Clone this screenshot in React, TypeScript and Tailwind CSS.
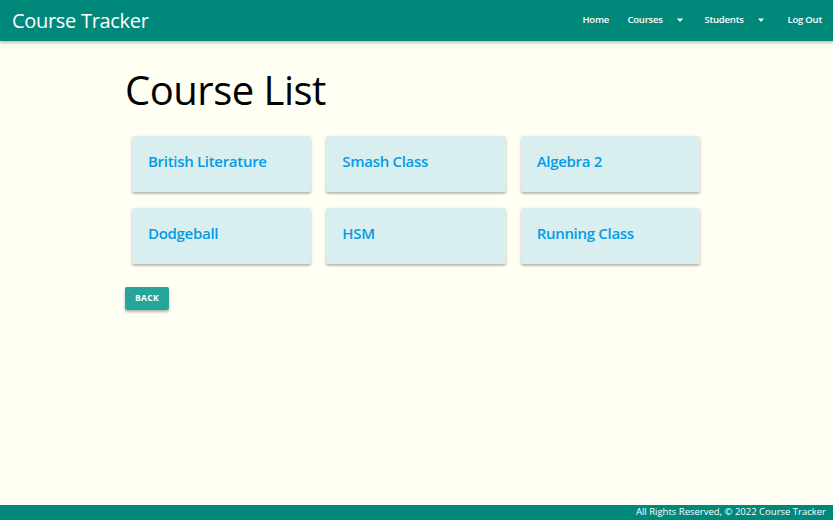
import React from "react";

const courses = [
  "British Literature",
  "Smash Class",
  "Algebra 2",
  "Dodgeball",
  "HSM",
  "Running Class",
];

function Caret() {
  return (
    <svg width="8" height="5" viewBox="0 0 8 5" className="ml-[13px]">
      <path d="M1 0.5 L7 0.5 L4 4 Z" fill="#ffffff" />
    </svg>
  );
}

export default function App() {
  return (
    <div
      className="flex min-h-[520px] flex-col bg-[#fffff3] text-black"
      style={{ fontFamily: '"Open Sans", "Noto Sans", sans-serif' }}
    >
      <nav className="relative z-10 flex h-[41px] items-center justify-between bg-[#00897b] pl-[12px] pr-[11px] text-white shadow-[0_2px_3px_rgba(0,0,0,0.25)]">
        <span className="text-[20px] leading-none tracking-[-0.3px]">Course Tracker</span>
        <ul className="flex items-center text-[9.5px] font-semibold tracking-[-0.2px]">
          <li className="w-[45px]">Home</li>
          <li className="flex w-[77px] items-center">
            Courses
            <Caret />
          </li>
          <li className="flex w-[83px] items-center">
            Students
            <Caret />
          </li>
          <li>Log Out</li>
        </ul>
      </nav>

      <main className="mx-auto w-[583px] flex-1">
        <h1 className="mt-[24px] text-[40px] leading-[50px] tracking-[-0.5px]">Course List</h1>
        <div className="mt-[21px] ml-[7px] grid w-[568px] grid-cols-3 gap-x-[15px] gap-y-[16px]">
          {courses.map((c) => (
            <div
              key={c}
              className="flex h-[56px] items-center rounded-[2px] bg-[#d9efef] px-[16px] pb-[5px] shadow-[0_2px_2px_rgba(0,0,0,0.2),0_1px_4px_rgba(0,0,0,0.12)]"
            >
              <span className="text-[15px] font-semibold text-[#039be5] tracking-[-0.3px]">{c}</span>
            </div>
          ))}
        </div>
        <button
          type="button"
          className="mt-[23px] flex h-[23px] w-[44px] items-center justify-center rounded-[2px] bg-[#26a69a] text-[8.5px] font-bold tracking-[0.4px] text-white shadow-[0_2px_3px_rgba(0,0,0,0.3)]"
        >
          BACK
        </button>
      </main>

      <footer className="flex h-[15px] items-center justify-end bg-[#00897b] pr-[7px] text-[9.5px] text-white">
        All Rights Reserved, © 2022 Course Tracker
      </footer>
    </div>
  );
}
